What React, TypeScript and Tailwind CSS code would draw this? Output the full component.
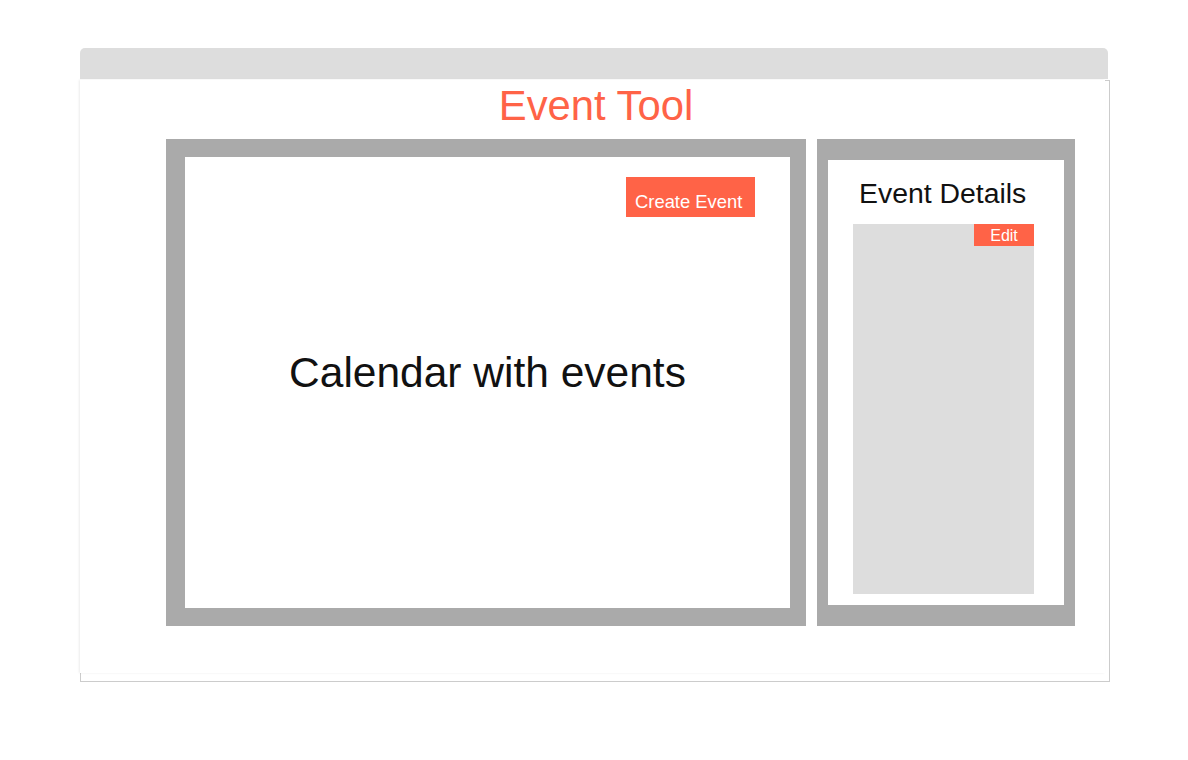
import React from 'react';

function CalendarPanel() {
  return (
    <div className="w-[640px] h-[487px] bg-[#aaaaaa] pt-[18px] pl-[19px] pr-[16px] pb-[18px]">
      <div className="w-full h-full bg-white flex flex-col">
        {/* Toolbar */}
        <div className="flex justify-end pt-[20px] pr-[35px]">
          <button className="w-[129px] h-[40px] bg-[#ff6347] text-white text-[18.4px] leading-none pl-[9px] pt-[11px] text-left">
            Create Event
          </button>
        </div>
        <div className="mt-[135px] text-center text-[42.5px] leading-none text-[#111111]">
          Calendar with events
        </div>
      </div>
    </div>
  );
}

function DetailsPanel() {
  return (
    <div className="w-[258px] h-[487px] bg-[#aaaaaa] py-[21px] px-[11px]">
      <div className="w-full h-full bg-white flex flex-col">
        <div className="mt-[19px] pl-[31px] text-[28.4px] leading-none text-[#111111]">Event Details</div>
        <div className="mt-[17px] ml-[25px] w-[181px] h-[370px] bg-[#dddddd] flex justify-end items-start">
          <button className="w-[60px] h-[22px] bg-[#ff6347] text-white text-[16px] leading-none pt-[2px]">Edit</button>
        </div>
      </div>
    </div>
  );
}

export default function App() {
  return (
    <div className="min-h-screen bg-white pt-[48px] pl-[80px] font-['Liberation_Sans',Arial,sans-serif]">
      {/* Window title bar */}
      <div className="w-[1028px] h-[31px] bg-[#dddddd] rounded-t-[5px]" />
      {/* Window body */}
      <div className="mt-px w-[1030px] h-[602px] border border-[#cccccc]">
        <div className="-mt-px -ml-px w-[1025px] h-[593px] bg-white shadow-[-1px_0_2px_rgba(0,0,0,0.08)] flex flex-col">
          <h1 className="mt-[5px] h-[41px] pl-[7px] text-center text-[41.8px] leading-none text-[#ff6347]">Event Tool</h1>
          <div className="mt-[13px] pl-[86px] flex gap-[11px]">
            <CalendarPanel />
            <DetailsPanel />
          </div>
        </div>
      </div>
    </div>
  );
}
